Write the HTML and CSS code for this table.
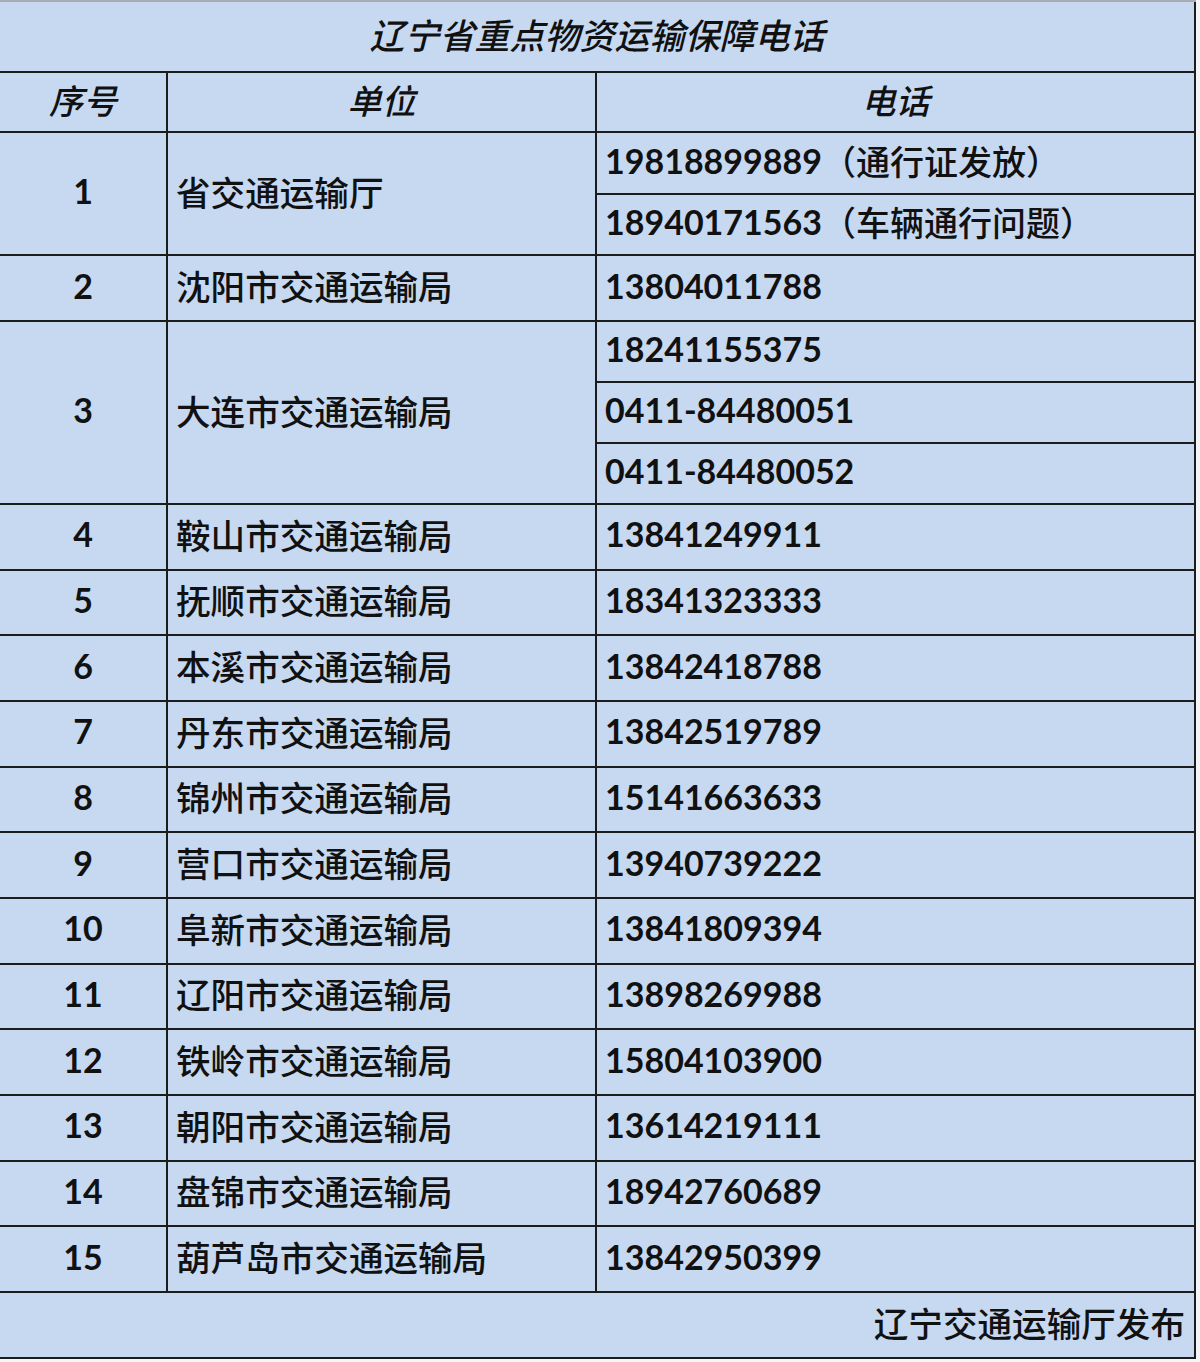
FILE: index.html
```html
<!DOCTYPE html>
<html lang="zh-CN">
<head>
<meta charset="utf-8">
<title>辽宁省重点物资运输保障电话</title>
<link rel="stylesheet" href="styles.css">
</head>
<body>
<div class="sheet">
  <div class="cell title">辽宁省重点物资运输保障电话</div>
  <div class="cell head">序号</div>
  <div class="cell head">单位</div>
  <div class="cell head">电话</div>

  <div class="cell num r1">1</div>
  <div class="cell unit r1">省交通运输厅</div>
  <div class="cell tel">19818899889<span class="note">（通行证发放）</span></div>
  <div class="cell tel">18940171563<span class="note">（车辆通行问题）</span></div>

  <div class="cell num">2</div>
  <div class="cell unit">沈阳市交通运输局</div>
  <div class="cell tel">13804011788</div>

  <div class="cell num r3">3</div>
  <div class="cell unit r3">大连市交通运输局</div>
  <div class="cell tel">18241155375</div>
  <div class="cell tel">0411-84480051</div>
  <div class="cell tel">0411-84480052</div>

  <div class="cell num">4</div>
  <div class="cell unit">鞍山市交通运输局</div>
  <div class="cell tel">13841249911</div>

  <div class="cell num">5</div>
  <div class="cell unit">抚顺市交通运输局</div>
  <div class="cell tel">18341323333</div>

  <div class="cell num">6</div>
  <div class="cell unit">本溪市交通运输局</div>
  <div class="cell tel">13842418788</div>

  <div class="cell num">7</div>
  <div class="cell unit">丹东市交通运输局</div>
  <div class="cell tel">13842519789</div>

  <div class="cell num">8</div>
  <div class="cell unit">锦州市交通运输局</div>
  <div class="cell tel">15141663633</div>

  <div class="cell num">9</div>
  <div class="cell unit">营口市交通运输局</div>
  <div class="cell tel">13940739222</div>

  <div class="cell num">10</div>
  <div class="cell unit">阜新市交通运输局</div>
  <div class="cell tel">13841809394</div>

  <div class="cell num">11</div>
  <div class="cell unit">辽阳市交通运输局</div>
  <div class="cell tel">13898269988</div>

  <div class="cell num">12</div>
  <div class="cell unit">铁岭市交通运输局</div>
  <div class="cell tel">15804103900</div>

  <div class="cell num">13</div>
  <div class="cell unit">朝阳市交通运输局</div>
  <div class="cell tel">13614219111</div>

  <div class="cell num">14</div>
  <div class="cell unit">盘锦市交通运输局</div>
  <div class="cell tel">18942760689</div>

  <div class="cell num">15</div>
  <div class="cell unit">葫芦岛市交通运输局</div>
  <div class="cell tel">13842950399</div>

  <div class="cell footer">辽宁交通运输厅发布</div>
</div>
</body>
</html>
```

FILE: styles.css
```css
html, body {
  margin: 0;
  padding: 0;
}
body {
  background: #f3f5f8;
  width: 1200px;
  height: 1362px;
  overflow: hidden;
}
.sheet {
  width: 1196px;
  box-sizing: border-box;
  display: grid;
  grid-template-columns: 166px 427px 597px;
  grid-template-rows: 69px 58px 60px 59px 64px 59px 59px 59px repeat(12, 63.67px) 64px;
  gap: 2px;
  background: #1c1c1c;
  border-top: 2px solid #a7acb2;
  padding: 0 2px 2px 0;
  font-family: "Lato", "Noto Sans CJK SC", sans-serif;
  color: #111;
}
.cell {
  background: #c6d9f1;
  display: flex;
  align-items: center;
  font-size: 34px;
  font-weight: 700;
  white-space: nowrap;
  overflow: hidden;
  box-sizing: border-box;
  padding-bottom: 6px;
}
.title {
  grid-column: 1 / 4;
  justify-content: center;
  font-style: italic;
  font-weight: 500;
  font-size: 35px;
  font-family: "Noto Sans CJK SC", sans-serif;
  padding-bottom: 7px;
}
.head {
  justify-content: center;
  font-style: italic;
  font-weight: 500;
  font-family: "Noto Sans CJK SC", sans-serif;
}
.num {
  justify-content: center;
}
.unit {
  padding-left: 8px;
  font-family: "Noto Sans CJK SC", sans-serif;
  font-weight: 500;
  font-size: 34.6px;
}
.tel {
  padding-left: 8px;
}
.note {
  font-family: "Noto Sans CJK SC", sans-serif;
  font-weight: 500;
}
.r1 {
  grid-row: span 2;
}
.r3 {
  grid-row: span 3;
}
.footer {
  grid-column: 1 / 4;
  justify-content: flex-end;
  padding-right: 9px;
  font-family: "Noto Sans CJK SC", sans-serif;
  font-weight: 500;
  font-size: 34.6px;
}
```
